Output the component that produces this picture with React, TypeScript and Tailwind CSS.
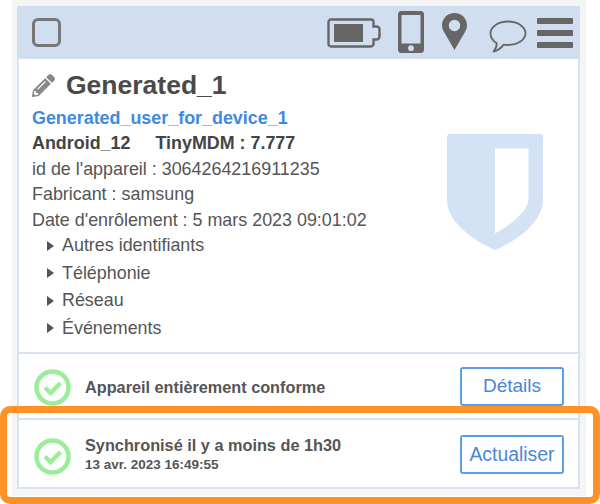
import { FaPencilAlt } from "react-icons/fa";

const DETAILS = ["Autres identifiants", "Téléphonie", "Réseau", "Événements"];

function BatteryIcon() {
  return (
    <svg width="55" height="30" viewBox="0 0 55 30" className="shrink-0">
      <path d="M4 1.500h40a2.500 2.500 0 0 1 2.500 2.500v4.500h3a3 3 0 0 1 3 3v7a3 3 0 0 1-3 3h-3V26a2.500 2.500 0 0 1-2.500 2.500H4A2.500 2.500 0 0 1 1.500 26V4A2.500 2.500 0 0 1 4 1.500z" fill="none" stroke="#666" strokeWidth="2.400" />
      <rect x="7" y="6" width="29" height="18" fill="#666" />
    </svg>
  );
}

function PhoneIcon() {
  return (
    <svg width="26" height="42" viewBox="0 0 26 42" className="shrink-0">
      <path fillRule="evenodd" d="M3.500 0h19A3.500 3.500 0 0 1 26 3.500V38.500a3.500 3.500 0 0 1-3.500 3.500h-19A3.500 3.500 0 0 1 0 38.500V3.500A3.500 3.500 0 0 1 3.500 0zM3.500 4v28.500h19V4zM13 34.300a2.900 2.900 0 1 0 0 5.800a2.900 2.900 0 0 0 0-5.800z" fill="#666" />
    </svg>
  );
}

function PinIcon() {
  return (
    <svg width="25" height="37" viewBox="0 0 25 37" className="shrink-0">
      <path fillRule="evenodd" d="M12.500 0C5.600 0 0 5.500 0 12.300c0 2.700.9 4.800 2.200 7L12.500 37l10.300-17.700c1.300-2.200 2.200-4.300 2.200-7C25 5.500 19.400 0 12.500 0zm0 6.800a5.700 5.700 0 1 1 0 11.400a5.700 5.700 0 0 1 0-11.400z" fill="#666" />
    </svg>
  );
}

function ChatIcon() {
  return (
    <svg width="38" height="33" viewBox="0 0 38 33" className="shrink-0">
      <path d="M19 1.500c9.700 0 17.500 5.300 17.500 11.800S28.700 25 19 25c-1.500 0-3-.1-4.300-.4C12.500 27.500 9.500 30.300 4.500 31.500c1.800-2 3.300-5 3.300-8.200C3.800 21 1.500 17.300 1.500 13.300 1.500 6.800 9.300 1.500 19 1.500z" fill="none" stroke="#666" strokeWidth="1.800" strokeLinejoin="round" />
    </svg>
  );
}

function MenuIcon() {
  return (
    <div className="flex flex-col gap-[6px] w-[36px] shrink-0">
      <div className="h-[6px] bg-[#666] rounded-[1px]" />
      <div className="h-[6px] bg-[#666] rounded-[1px]" />
      <div className="h-[6px] bg-[#666] rounded-[1px]" />
    </div>
  );
}

function ShieldIcon() {
  return (
    <svg width="96" height="116" viewBox="0 0 96 116" className="shrink-0">
      <path fillRule="evenodd" d="M3 0h90a3 3 0 0 1 3 3v62c0 11-5 20-14 29c-9 8.500-19 15.500-34 22c-15-6.500-25-13.500-34-22C5 85 0 76 0 65V3a3 3 0 0 1 3-3zM48 14.500v85c10-5.500 18-11 24-17.500c6-6 9.500-11.500 9.500-18V14.500z" fill="#d3e2f5" />
    </svg>
  );
}

function CheckBadge() {
  return (
    <svg width="37" height="37" viewBox="0 0 37 37" className="shrink-0">
      <circle cx="18.500" cy="18.500" r="16" fill="none" stroke="#9aee9a" strokeWidth="4.500" />
      <path d="M11 18.500l5.500 5.500l10-10" fill="none" stroke="#9aee9a" strokeWidth="4.500" />
    </svg>
  );
}

function OutlineButton({ label, textSize }: { label: string; textSize: string }) {
  return (
    <button className={`w-[104px] h-[39px] border-2 border-[#5ba0e6] rounded-[3px] bg-white ${textSize} text-[#4a86d8] flex items-center justify-center`}>
      {label}
    </button>
  );
}

export default function App() {
  return (
    <div className="relative w-[600px] h-[504px] overflow-hidden bg-white font-['Liberation_Sans',Arial,sans-serif] text-[#555]">
      <div className="ml-[12px] w-[574px] h-[496px] bg-[#f5f5f5] pt-[6px] px-[5px]">
        <div className="w-[563px] h-[483px] bg-white border-x-2 border-b-2 border-[#d8e3f2] flex flex-col">
          {/* top icon bar */}
          <div className="h-[53px] -mx-[2px] bg-[#d0deef] flex items-center justify-between pl-[15px] pr-[7px] shrink-0">
            <div className="w-[29px] h-[29px] border-[3px] border-[#777] rounded-[6px] -mt-[1px]" />
            <div className="flex items-center">
              <BatteryIcon />
              <div className="ml-[16px] -mt-[2px]"><PhoneIcon /></div>
              <div className="ml-[18px] -mt-[2px]"><PinIcon /></div>
              <div className="ml-[22px] mt-[8px]"><ChatIcon /></div>
              <div className="ml-[10px]"><MenuIcon /></div>
            </div>
          </div>

          {/* device info */}
          <div className="h-[295px] px-[13px] flex justify-between border-b-2 border-[#d8e3f2] shrink-0">
            <div className="pt-[10px]">
              <div className="flex items-center h-[32px]">
                <FaPencilAlt className="text-[#888] text-[23px] shrink-0" />
                <h1 className="ml-[11px] text-[26.500px] font-bold text-[#4a4a4a] leading-none">Generated_1</h1>
              </div>
              <a className="block mt-[5px] text-[17.900px] leading-[25px] font-bold text-[#3f8ae0]">Generated_user_for_device_1</a>
              <div className="text-[17.900px] leading-[25.500px]">
                <div className="flex gap-[25px] font-bold text-[#444]">
                  <span>Android_12</span>
                  <span>TinyMDM : 7.777</span>
                </div>
                <div>id de l'appareil : 3064264216911235</div>
                <div>Fabricant : samsung</div>
                <div>Date d'enrôlement : 5 mars 2023 09:01:02</div>
              </div>
              <ul className="pl-[15px] text-[17.900px] leading-[27.500px] mt-[-1px]">
                {DETAILS.map((item) => (
                  <li key={item} className="flex items-center">
                    <span className="w-0 h-0 border-y-[5px] border-y-transparent border-l-[7px] border-l-[#555] mr-[8px]" />
                    {item}
                  </li>
                ))}
              </ul>
            </div>
            <div className="pt-[75px] pr-[22px]">
              <ShieldIcon />
            </div>
          </div>

          {/* compliance */}
          <div className="h-[66px] flex items-center justify-between pl-[15px] pr-[14px] border-b-2 border-[#d8e3f2] shrink-0">
            <div className="flex items-center">
              <div className="mt-[3px]"><CheckBadge /></div>
              <span className="ml-[14px] mt-[3px] text-[16.250px] font-bold text-[#555]">Appareil entièrement conforme</span>
            </div>
            <OutlineButton label="Détails" textSize="text-[19px]" />
          </div>

          {/* sync */}
          <div className="flex-1 flex items-center justify-between pl-[15px] pr-[14px] pt-[2px]">
            <div className="flex items-center">
              <div className="mt-[3px]"><CheckBadge /></div>
              <div className="ml-[14px] mt-[1px]">
                <div className="text-[16.300px] leading-[20px] font-bold text-[#555]">Synchronisé il y a moins de 1h30</div>
                <div className="text-[13.500px] leading-[20px] font-bold text-[#555]">13 avr. 2023 16:49:55</div>
              </div>
            </div>
            <OutlineButton label="Actualiser" textSize="text-[19.400px]" />
          </div>
        </div>
      </div>

      {/* highlight frame drawn over the card */}
      <div className="absolute left-0 top-[406px] w-[600px] h-[98px] border-[7px] border-[#ff9226] rounded-[10px]" />
    </div>
  );
}
